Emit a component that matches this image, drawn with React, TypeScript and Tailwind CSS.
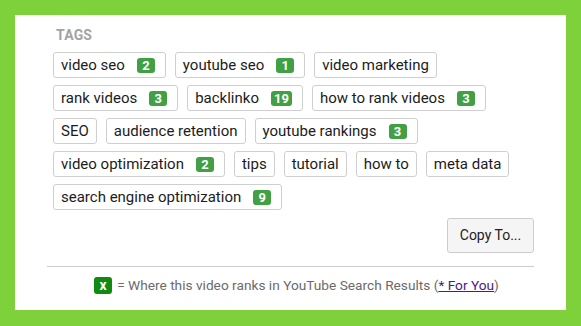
import React from "react";

type Tag = { label: string; rank?: number };

const tags: Tag[] = [
  { label: "video seo", rank: 2 },
  { label: "youtube seo", rank: 1 },
  { label: "video marketing" },
  { label: "rank videos", rank: 3 },
  { label: "backlinko", rank: 19 },
  { label: "how to rank videos", rank: 3 },
  { label: "SEO" },
  { label: "audience retention" },
  { label: "youtube rankings", rank: 3 },
  { label: "video optimization", rank: 2 },
  { label: "tips" },
  { label: "tutorial" },
  { label: "how to" },
  { label: "meta data" },
  { label: "search engine optimization", rank: 9 },
];

function TagChip({ tag }: { tag: Tag }) {
  return (
    <div className="flex h-[26px] items-center rounded-[3px] border border-[#cfcfcf] bg-white pl-[7px] pr-[7px] text-[15px] text-[#1c1c1c]">
      <span>{tag.label}</span>
      {tag.rank !== undefined && (
        <span className="ml-[12px] mr-[3px] flex h-[15px] min-w-[18px] items-center justify-center rounded-[3px] bg-[#41a043] px-[3px] text-[13px] font-bold leading-none text-white">
          {tag.rank}
        </span>
      )}
    </div>
  );
}

export default function App() {
  return (
    <div
      className="h-[326px] w-[581px] bg-[#7fd13b] pt-[15px] pl-[15px] pr-[15px] pb-[16px]"
      style={{ fontFamily: "Roboto, 'Liberation Sans', sans-serif" }}
    >
      <div className="flex h-full flex-col bg-white px-[32px] pt-[12px]">
        {/* tags */}
        <div className="pl-[6px]">
          <div className="pl-[3px] text-[14px] font-bold leading-[16px] tracking-[0.2px] text-[#a3a3a3]">TAGS</div>
          <div className="mt-[9px] flex flex-wrap gap-x-[9px] gap-y-[7px] pr-[6px]">
            {tags.map((t, i) => (
              <TagChip key={i} tag={t} />
            ))}
          </div>
          <div className="mt-[8px] flex justify-end">
            <button className="h-[35px] w-[87px] rounded-[3px] border border-[#cccccc] bg-[#f5f5f5] text-[14px] text-[#222]">
              Copy To...
            </button>
          </div>
        </div>

        <div className="mt-[13px] border-t border-[#cccccc]" />

        {/* legend */}
        <div className="mt-[8px] flex items-center justify-center pl-[12px] text-[13.7px] text-[#6b6b6b]">
          <span className="mr-[5px] flex h-[17px] w-[18px] items-center justify-center rounded-[3px] bg-[#108a10] text-[14px] font-bold leading-none text-white">
            x
          </span>
          <span>
            = Where this video ranks in YouTube Search Results (
            <a href="#" className="text-[#4b1a8b] underline">
              * For You
            </a>
            )
          </span>
        </div>
      </div>
    </div>
  );
}
